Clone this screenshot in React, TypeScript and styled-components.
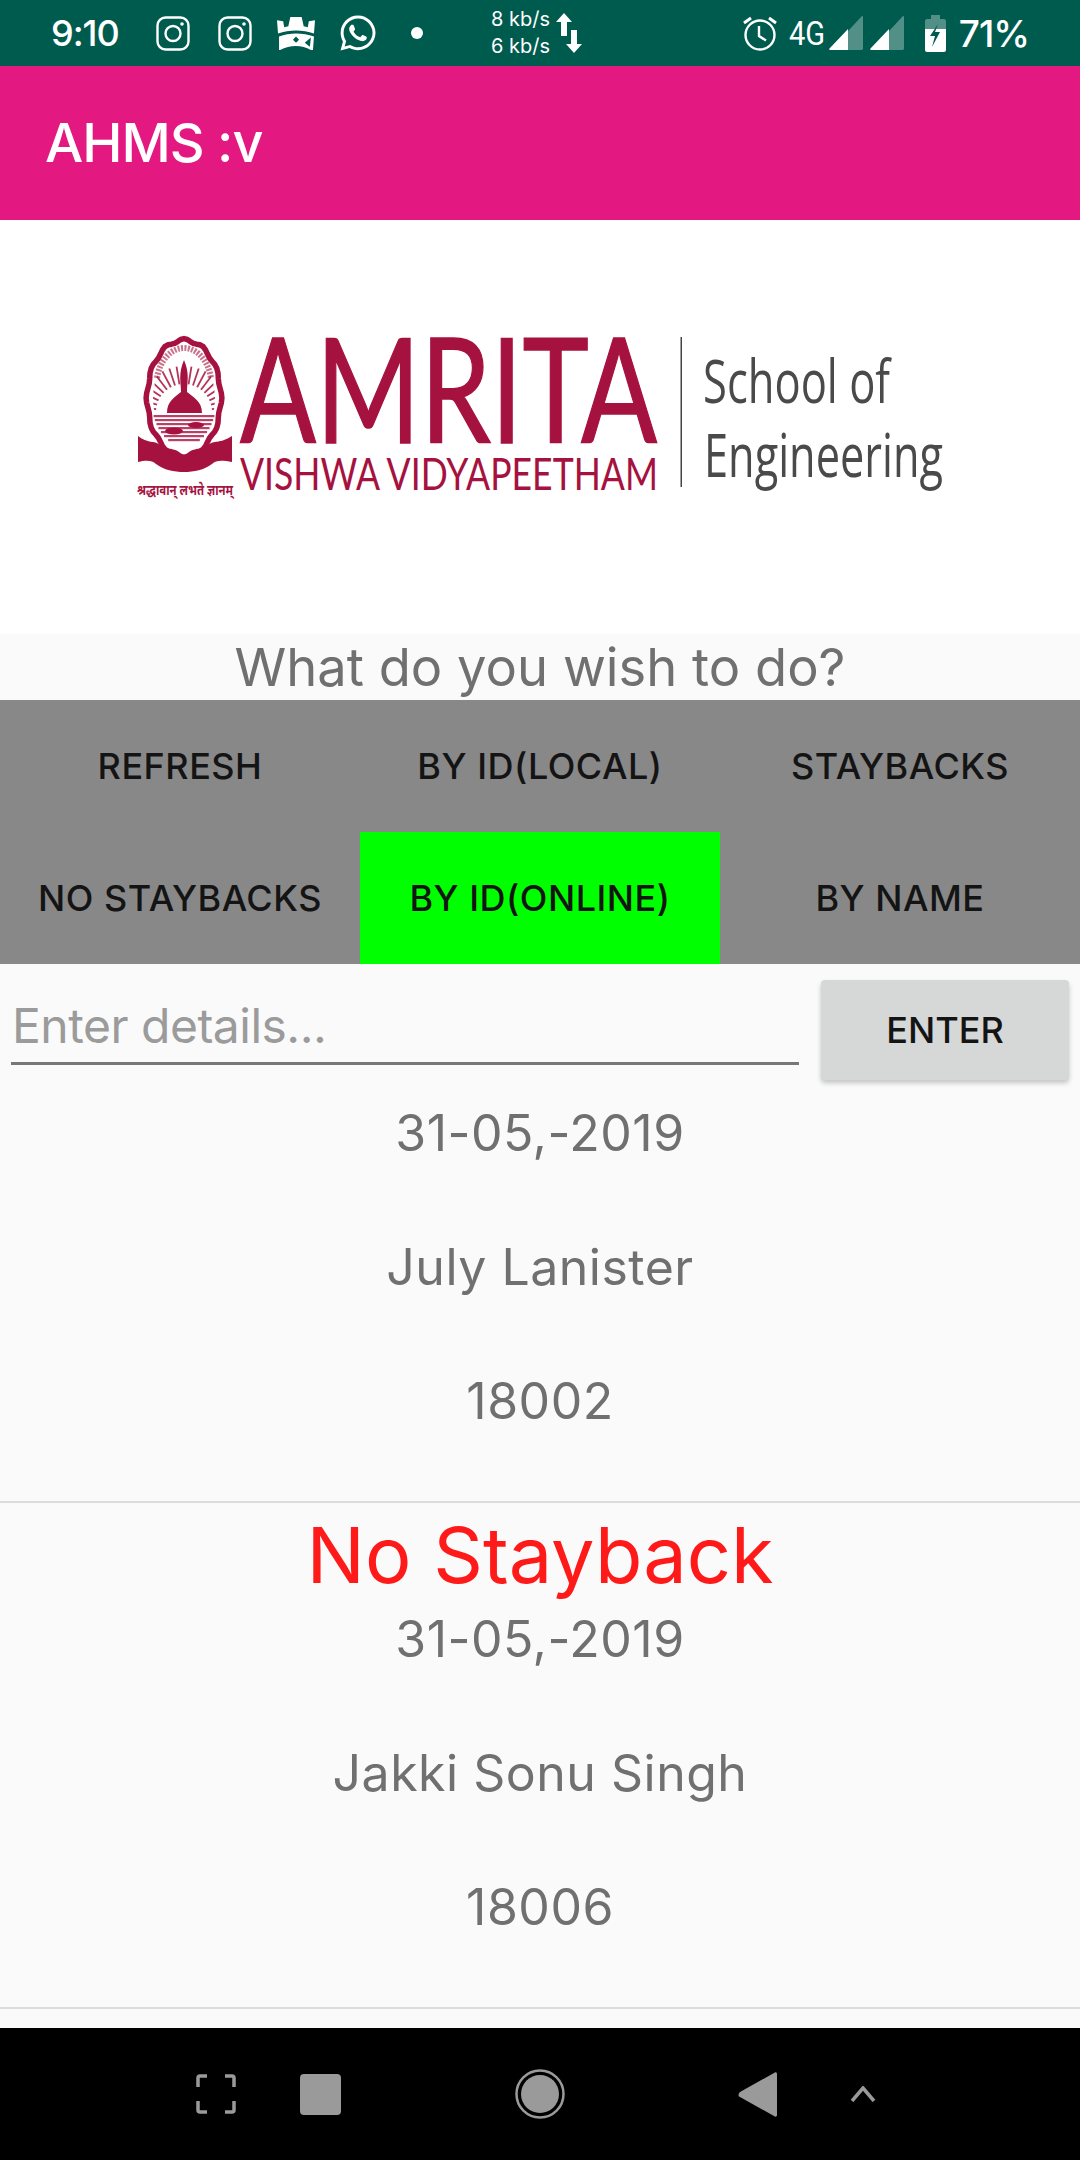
import React from "react";
import styled, { createGlobalStyle } from "styled-components";
import { FaWhatsapp } from "react-icons/fa";

const Global = createGlobalStyle`
  html, body { margin: 0; padding: 0; background: #fafafa; }
  * { box-sizing: border-box; }
`;
const FONT = `Inter, "Open Sans", "Liberation Sans", sans-serif`;

const Page = styled.div`
  width: 1080px; height: 2160px; display: flex; flex-direction: column;
  background: #fafafa; font-family: ${FONT}; overflow: hidden;
`;
const StatusBar = styled.div`
  height: 66px; flex: none; background: #005b4f; color: #fff;
  display: flex; align-items: center; justify-content: space-between;
  padding: 0 51px;
`;
const StatusGroup = styled.div`display: flex; align-items: center;`;
const Clock = styled.span`font-size: 36px; font-weight: 500; letter-spacing: -1px; width: 105px;`;
const Slot = styled.span<{ $w: number; $gap?: number }>`
  display: flex; align-items: center; justify-content: center;
  width: ${p => p.$w}px; margin-right: ${p => p.$gap ?? 0}px;
  svg { display: block; }
`;
const Speed = styled.span`
  display: flex; flex-direction: column; font-size: 20px; line-height: 27px; width: 64px;
`;
const FourG = styled.span`
  font-family: "Roboto", sans-serif; font-size: 33px; width: 40px;
  transform: scaleX(.88); transform-origin: left;
`;
const Percent = styled.span`font-size: 37px; font-weight: 500; letter-spacing: -1px;`;

const Toolbar = styled.header`
  height: 154px; flex: none; background: #e31881; color: #fff;
  display: flex; align-items: center; padding: 0 45px 2px;
  font-size: 54px; font-weight: 500; letter-spacing: -1px;
`;
const LogoBand = styled.div`height: 414px; flex: none; background: #fff;`;
const LogoArt = styled.svg`display: block;`;
const Question = styled.div`
  height: 66px; flex: none; display: flex; align-items: center; justify-content: center;
  font-size: 52.500px; color: #707070;
`;
const Tabs = styled.div`
  flex: none; display: grid; grid-template-columns: repeat(3, 360px); grid-auto-rows: 132px;
  background: #888;
`;
const Tab = styled.div<{ $active?: boolean }>`
  display: flex; align-items: center; justify-content: center;
  font-size: 36px; font-weight: 500; color: #141414; letter-spacing: .5px;
  background: ${p => (p.$active ? "#00ff00" : "transparent")};
`;
const EntryRow = styled.div`
  height: 102px; flex: none; display: flex; align-items: flex-start; padding: 16px 11px 0;
`;
const Field = styled.input`
  width: 788px; height: 85px; border: 0; border-bottom: 3px solid #777; background: transparent;
  padding: 8px 0 0 1px; font-family: ${FONT}; font-size: 48px; outline: none; letter-spacing: -.5px;
  &::placeholder { color: #9b9b9b; opacity: 1; }
`;
const EnterButton = styled.button`
  width: 248px; height: 100px; margin-left: 22px; border: 0; border-radius: 4px; background: #d6d7d7;
  box-shadow: 0 3px 5px rgba(0,0,0,.22); font-family: ${FONT}; font-size: 36px; font-weight: 500; color: #141414;
`;
const Records = styled.div`flex: 1; min-height: 0;`;
const Record = styled.div`
  padding-bottom: 33px; border-bottom: 2px solid #dcdcdc; text-align: center;
`;
const Banner = styled.div`
  height: 69px; line-height: 105px; font-size: 77.500px; color: #ff1a1a;
`;
const Line = styled.div`
  height: 134px; line-height: 134px; font-size: 50px; color: #707070; letter-spacing: .5px;
`;
const NavBar = styled.nav`
  height: 132px; flex: none; background: #000; display: flex; align-items: center; padding-left: 196px;
`;
const NavSlot = styled.span<{ $gap: number }>`
  display: flex; margin-right: ${p => p.$gap}px; svg { display: block; }
`;

const Insta = () => (
  <svg width="34" height="35" viewBox="0 0 34 35" fill="none" stroke="#fff" strokeWidth="2.4">
    <rect x="1.5" y="1.5" width="31" height="32" rx="8" />
    <circle cx="17" cy="17.5" r="7.5" />
    <circle cx="26" cy="8" r="1.8" fill="#fff" stroke="none" />
  </svg>
);
const Crown = () => (
  <svg width="38" height="34" viewBox="0 0 37 33" fill="#fff">
    <path d="M0 4l6 1 1 6 4-1 2-9h11l2 9 4 1 1-6 6-1-1 13c-11-4-24-4-35 0z" />
    <path d="M2 20c10-4 23-4 34 0l-1 13h-2c-9-5-20-5-30 0H2z" />
    <path d="M18.500 20l3 3-3 3-3-3z" fill="#005b4f" />
    <path d="M27 26l6-5-1 9z" fill="#005b4f" />
  </svg>
);
const Arrows = () => (
  <svg width="28" height="40" viewBox="0 0 28 40" fill="#fff">
    <path d="M9 0l8 9h-5v14H6V9H1z" />
    <path d="M19 40l-8-9h5V17h6v14h5z" />
  </svg>
);
const Alarm = () => (
  <svg width="34" height="36" viewBox="0 0 34 36" fill="none" stroke="#fff" strokeWidth="2.4">
    <circle cx="17" cy="20" r="14.500" />
    <path d="M16 11v10l7 4.500" />
    <path d="M1 8l7-5M33 8l-7-5" strokeWidth="3" />
  </svg>
);
const Signal = () => (
  <svg width="34" height="34" viewBox="0 0 34 34">
    <path d="M33 0c.6 0 1 .5 1 1v32l-1 1H19V15z" fill="#fff" opacity=".32" />
    <path d="M19 13v21H1c-1 0-1-1-.5-1.500z" fill="#fff" />
  </svg>
);
const Battery = () => (
  <svg width="21" height="37" viewBox="0 0 21 37">
    <path d="M6 0h9v4h4c1 0 2 1 2 2v8H0V6c0-1 1-2 2-2h4z" fill="#fff" opacity=".32" />
    <path d="M0 14h21v21c0 1-1 2-2 2H2c-1 0-2-1-2-2z" fill="#fff" />
    <path d="M13 9L5 21h5l-3 11 8-15h-5z" fill="#005b4f" />
  </svg>
);

const CRIMSON = "#a6123f";
const scallop = Array.from({ length: 72 }, (_, i) => {
  const t = (i / 72) * Math.PI * 2;
  const bump = 1 + 0.025 * Math.cos(t * 12);
  const x = 184 + 37 * bump * Math.sin(t);
  const y = 178 - 58 * bump * Math.cos(t);
  return `${x.toFixed(1)},${y.toFixed(1)}`;
}).join(" ");
const rays = Array.from({ length: 19 }, (_, i) => -84 + i * (168 / 18));
const waterLines = [195, 199, 203, 207, 211, 215, 219];

const Logo = () => (
  <LogoArt width="1080" height="414" viewBox="0 0 1080 414">
    <defs>
      <clipPath id="sealInner"><ellipse cx="184" cy="178" rx="31" ry="46" /></clipPath>
    </defs>
    <polygon points={scallop} fill="#fff" stroke={CRIMSON} strokeWidth="5.500" strokeLinejoin="round" />
    <path d="M157 158c3-18 14-30 27-30s24 12 27 30" fill="none" stroke={CRIMSON} strokeWidth="6" strokeDasharray="2 1.400" opacity=".6" />
    <g stroke={CRIMSON} strokeWidth="1.800" opacity=".85" clipPath="url(#sealInner)">
      {rays.map(a => (
        <line key={a} x1="184" y1="164" x2="184" y2="146" transform={`rotate(${a} 184 192)`} />
      ))}
    </g>
    <g fill={CRIMSON}>
      <path d="M167 193c0-12 8-16 14-21 0-10-3-18 3-32 6 14 3 22 3 32 6 5 15 9 15 21z" />
      {waterLines.map(y => {
        const half = 33 * Math.sqrt(1 - Math.pow((y - 176) / 49, 2));
        return <rect key={y} x={184 - half} y={y} width={half * 2} height="2.200" opacity=".8" />;
      })}
      <ellipse cx="174" cy="211" rx="9" ry="3.500" />
      <ellipse cx="196" cy="205" rx="8" ry="3" />
      <path d="M138 216c10 8 16 4 22 9 8 7 16 11 24 11s16-4 24-11c6-5 12-1 24-9v26c-10-2-16-2-20 2-8 6-18 8-28 8s-20-2-28-8c-4-4-10-4-18-2z" />
    </g>
    <text x="137" y="275" fontFamily="'Noto Sans', sans-serif" fontSize="15" fontWeight="700" fill={CRIMSON} textLength="96" lengthAdjust="spacingAndGlyphs">श्रद्धावान् लभते ज्ञानम्</text>
    <text x="240" y="223" fontFamily="Lato, sans-serif" fontSize="146" fill={CRIMSON} stroke={CRIMSON} strokeWidth="1.500" textLength="417" lengthAdjust="spacingAndGlyphs">AMRITA</text>
    <text x="240" y="270" fontFamily="Lato, sans-serif" fontSize="44" fill={CRIMSON} textLength="418" lengthAdjust="spacingAndGlyphs">VISHWA VIDYAPEETHAM</text>
    <rect x="680.500" y="117" width="1.500" height="150" fill="#444" />
    <text x="703" y="183" fontFamily="'Open Sans', sans-serif" fontSize="60" fill="#4a4a4a" textLength="187" lengthAdjust="spacingAndGlyphs">School of</text>
    <text x="704" y="257" fontFamily="'Open Sans', sans-serif" fontSize="60" fill="#4a4a4a" textLength="239" lengthAdjust="spacingAndGlyphs">Engineering</text>
  </LogoArt>
);

const tabs = ["REFRESH", "BY ID(LOCAL)", "STAYBACKS", "NO STAYBACKS", "BY ID(ONLINE)", "BY NAME"];

export default function App() {
  return (
    <Page>
      <Global />
      <StatusBar>
        <StatusGroup>
          <Clock>9:10</Clock>
          <Slot $w={34} $gap={28}><Insta /></Slot>
          <Slot $w={34} $gap={25}><Insta /></Slot>
          <Slot $w={38} $gap={23}><Crown /></Slot>
          <Slot $w={40} $gap={33}><FaWhatsapp size={40} color="#fff" /></Slot>
          <Slot $w={12} $gap={68}><svg width="12" height="12"><circle cx="6" cy="6" r="6" fill="#fff" /></svg></Slot>
          <Speed><span>8 kb/s</span><span>6 kb/s</span></Speed>
          <Slot $w={28}><Arrows /></Slot>
        </StatusGroup>
        <StatusGroup>
          <Slot $w={34} $gap={12}><Alarm /></Slot>
          <FourG>4G</FourG>
          <Slot $w={34} $gap={7}><Signal /></Slot>
          <Slot $w={34} $gap={21}><Signal /></Slot>
          <Slot $w={21} $gap={13}><Battery /></Slot>
          <Percent>71%</Percent>
        </StatusGroup>
      </StatusBar>
      <Toolbar>AHMS :v</Toolbar>
      <LogoBand><Logo /></LogoBand>
      <Question>What do you wish to do?</Question>
      <Tabs>
        {tabs.map((t, i) => <Tab key={t} $active={i === 4}>{t}</Tab>)}
      </Tabs>
      <EntryRow>
        <Field placeholder="Enter details..." />
        <EnterButton>ENTER</EnterButton>
      </EntryRow>
      <Records>
        <Record>
          <Line>31-05,-2019</Line>
          <Line>July Lanister</Line>
          <Line>18002</Line>
        </Record>
        <Record>
          <Banner>No Stayback</Banner>
          <Line>31-05,-2019</Line>
          <Line>Jakki Sonu Singh</Line>
          <Line>18006</Line>
        </Record>
      </Records>
      <NavBar>
        <NavSlot $gap={64}>
          <svg width="40" height="40" viewBox="0 0 40 40" fill="none" stroke="#9a9a9a" strokeWidth="3.500">
            <path d="M2 13V4q0-2 2-2h7M29 2h7q2 0 2 2v9M2 27v9q0 2 2 2h7M29 38h7q2 0 2-2v-9" />
          </svg>
        </NavSlot>
        <NavSlot $gap={174}>
          <svg width="41" height="41"><rect width="41" height="41" rx="4" fill="#9a9a9a" /></svg>
        </NavSlot>
        <NavSlot $gap={173}>
          <svg width="50" height="50"><circle cx="25" cy="25" r="23.500" fill="none" stroke="#9a9a9a" strokeWidth="2.500" /><circle cx="25" cy="25" r="19" fill="#9a9a9a" /></svg>
        </NavSlot>
        <NavSlot $gap={73}>
          <svg width="39" height="45" viewBox="0 0 39 45"><path d="M39 2v41c0 2-2 2-3 1L2 25c-2-1-2-3 0-5L36 1c1-1 3-1 3 1z" fill="#9a9a9a" /></svg>
        </NavSlot>
        <NavSlot $gap={0}>
          <svg width="26" height="16" viewBox="0 0 26 16" fill="none" stroke="#9a9a9a" strokeWidth="3.500"><path d="M2 15L13 2l11 13" /></svg>
        </NavSlot>
      </NavBar>
    </Page>
  );
}
